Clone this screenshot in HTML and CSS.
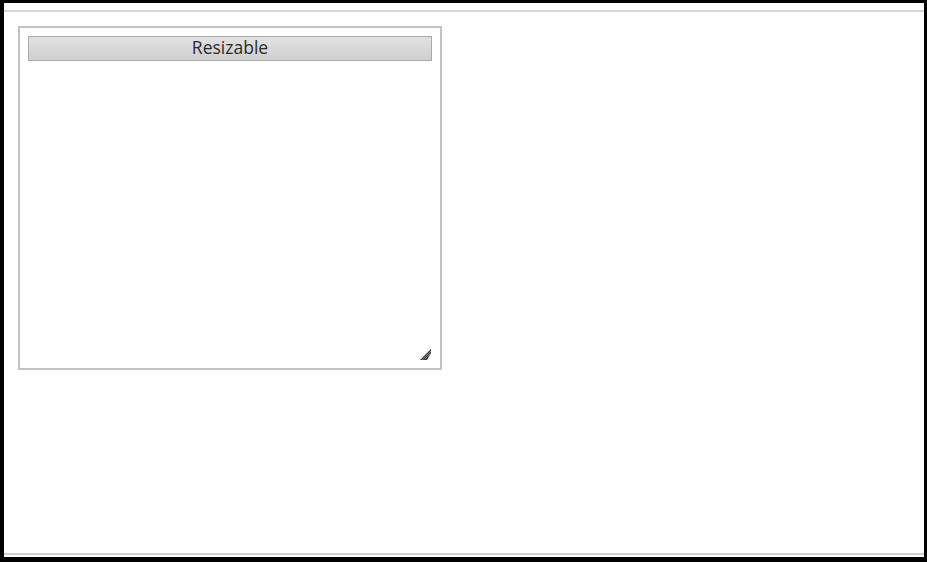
FILE: index.html
```html
<!DOCTYPE html>
<html>
<head>
<meta charset="utf-8">
<link rel="stylesheet" href="styles.css">
</head>
<body>
<div class="frame">
  <div class="page">
    <div class="resizable">
      <div class="header">Resizable</div>
      <svg class="handle" width="13" height="13" viewBox="0 0 13 13">
        <path d="M12 1 L12 5 L8 12 L1 12 Z" fill="#3a3a3a"/>
        <path d="M3 12 L12 3 M6 11 L11 6 M1.5 11 L11 1.5" stroke="#aaa" stroke-width="0.6"/>
      </svg>
    </div>
  </div>
</div>
</body>
</html>
```
FILE: styles.css
```css
html, body {
  margin: 0;
  padding: 0;
  background: #fff;
}
.frame {
  width: 927px;
  height: 562px;
  box-sizing: border-box;
  border-style: solid;
  border-color: #000;
  border-width: 3px 3px 5px 4px;
  padding-top: 7px;
  padding-bottom: 2px;
  display: flex;
  flex-direction: column;
}
.page {
  flex: 1;
  border-top: 2px solid #d6d6d6;
  border-bottom: 2px solid #cfcfcf;
  padding: 14px;
}
.resizable {
  position: relative;
  width: 424px;
  height: 344px;
  box-sizing: border-box;
  border: 2px solid #c2c2c2;
  padding: 8px;
  font-family: "Open Sans", "DejaVu Sans", sans-serif;
}
.header {
  height: 25px;
  box-sizing: border-box;
  border: 1px solid #aaa;
  background: linear-gradient(#e2e2e2, #cfcfcf);
  color: #2a2a2a;
  font-size: 17.5px;
  font-weight: 500;
  line-height: 21px;
  text-align: center;
}
.handle {
  position: absolute;
  right: 8px;
  bottom: 7px;
}
```
